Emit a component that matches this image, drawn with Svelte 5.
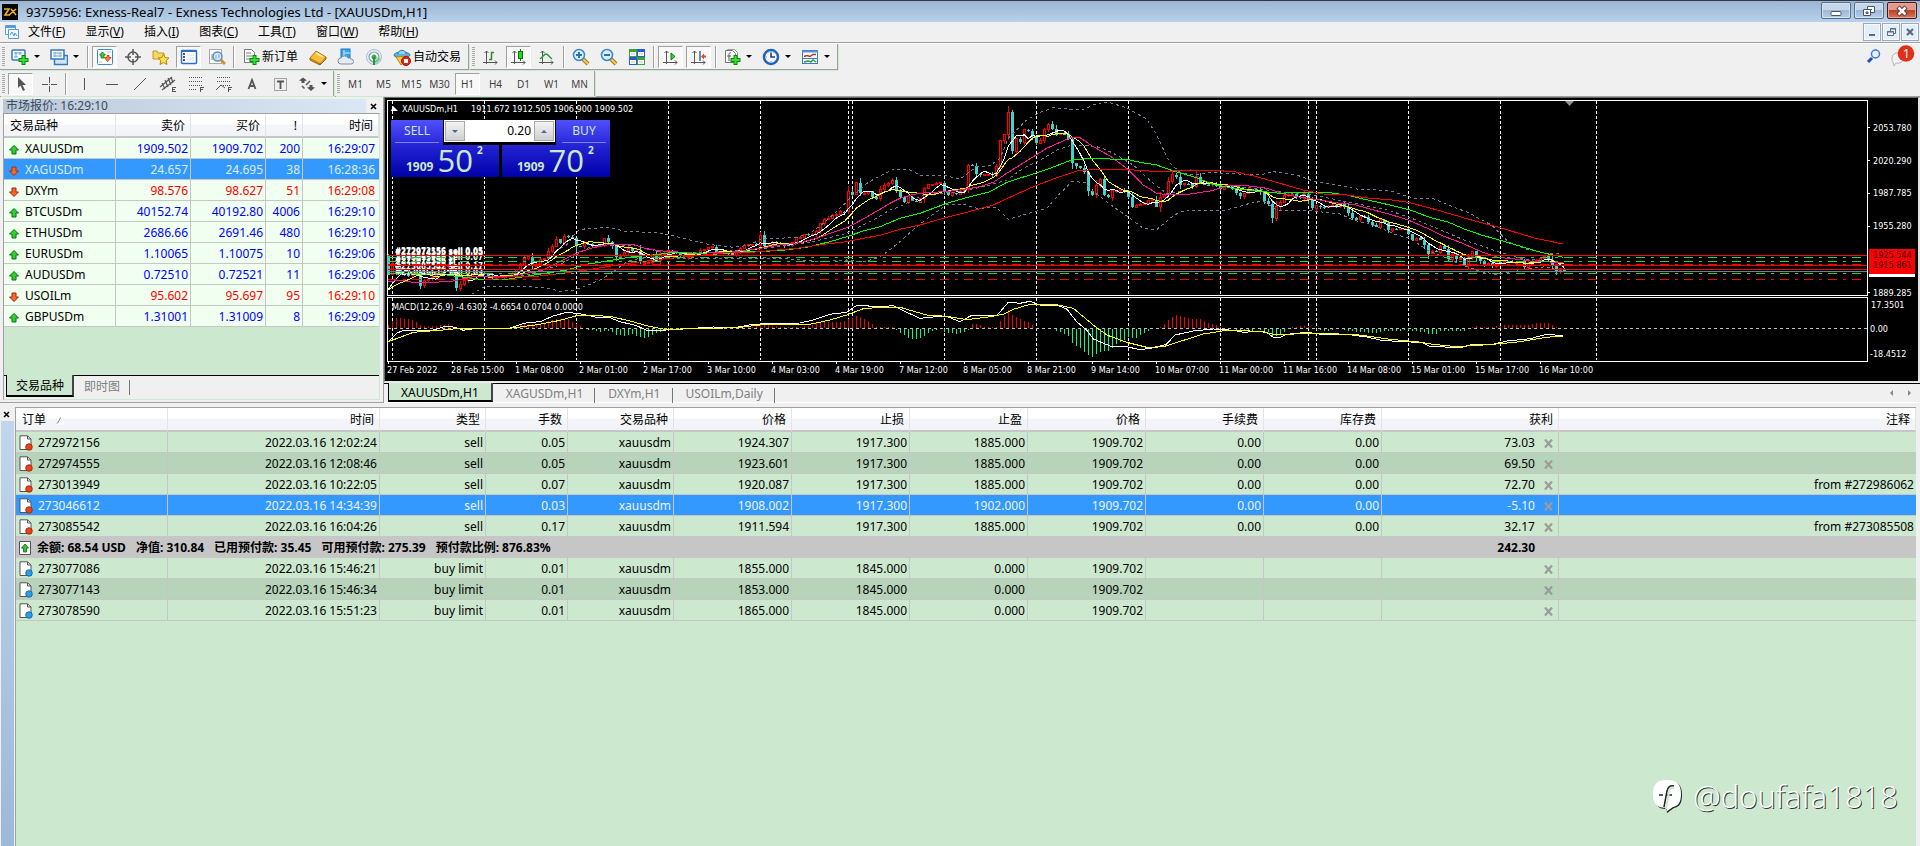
<script>
  const menus = [
    ['文件', 'F'], ['显示', 'V'], ['插入', 'I'], ['图表', 'C'], ['工具', 'T'], ['窗口', 'W'], ['帮助', 'H']
  ];

  // Toolbar descriptions: "|" is a separator; drop = has a menu arrow; on = pressed.
  const mainTools = [
    { icon: 'newchart', label: '新图表', drop: true },
    { icon: 'profiles', label: '配置文件', drop: true },
    '|',
    { icon: 'watch', label: '市场报价', on: true },
    { icon: 'target', label: '数据窗口' },
    { icon: 'favorites', label: '收藏夹' },
    { icon: 'terminal', label: '终端', on: true },
    { icon: 'tester', label: '策略测试' },
    '|',
    { icon: 'order', label: '新订单', text: '新订单' },
    { icon: 'book', label: '编辑器' },
    { icon: 'cloud', label: '云' },
    { icon: 'signal', label: '信号' },
    { icon: 'auto', label: '自动交易', text: '自动交易' }
  ];
  const chartTools = [
    { icon: 'bars', label: '柱状图' },
    { icon: 'candles', label: '蜡烛图', on: true },
    { icon: 'line', label: '折线图' },
    '|',
    { icon: 'zoomin', label: '放大' },
    { icon: 'zoomout', label: '缩小' },
    { icon: 'tile', label: '平铺' },
    '|',
    { icon: 'scroll', label: '自动滚动', on: true },
    { icon: 'shift', label: '图表平移', on: true },
    '|',
    { icon: 'indicator', label: '技术指标', drop: true },
    { icon: 'clock', label: '周期', drop: true },
    { icon: 'template', label: '模板', drop: true }
  ];
  const drawTools = [
    { icon: 'pointer', label: '光标', on: true },
    { icon: 'cross', label: '十字线' },
    '|',
    { icon: 'vline', label: '垂直线' },
    { icon: 'hline', label: '水平线' },
    { icon: 'trend', label: '趋势线' },
    { icon: 'channel', label: '通道' },
    { icon: 'fibo', label: '斐波那契' },
    { icon: 'fan', label: '扇形线' },
    { icon: 'text', label: '文字' },
    { icon: 'label', label: '标签' },
    { icon: 'arrows', label: '箭头', drop: true }
  ];
  const periods = ['M1', 'M5', 'M15', 'M30', 'H1', 'H4', 'D1', 'W1', 'MN'];

  const quotes = [
    ['XAUUSDm', '1909.502', '1909.702', '200', '16:29:07', 'up'],
    ['XAGUSDm', '24.657', '24.695', '38', '16:28:36', 'down'],
    ['DXYm', '98.576', '98.627', '51', '16:29:08', 'down'],
    ['BTCUSDm', '40152.74', '40192.80', '4006', '16:29:10', 'up'],
    ['ETHUSDm', '2686.66', '2691.46', '480', '16:29:10', 'up'],
    ['EURUSDm', '1.10065', '1.10075', '10', '16:29:06', 'up'],
    ['AUDUSDm', '0.72510', '0.72521', '11', '16:29:06', 'up'],
    ['USOILm', '95.602', '95.697', '95', '16:29:10', 'down'],
    ['GBPUSDm', '1.31001', '1.31009', '8', '16:29:09', 'up']
  ];

  const heads = ['时间', '类型', '手数', '交易品种', '价格', '止损', '止盈', '价格', '手续费', '库存费'];
  const open = [
    ['272972156', '2022.03.16 12:02:24', 'sell', '0.05', 'xauusdm', '1924.307', '1917.300', '1885.000', '1909.702', '0.00', '0.00', '73.03', ''],
    ['272974555', '2022.03.16 12:08:46', 'sell', '0.05', 'xauusdm', '1923.601', '1917.300', '1885.000', '1909.702', '0.00', '0.00', '69.50', ''],
    ['273013949', '2022.03.16 10:22:05', 'sell', '0.07', 'xauusdm', '1920.087', '1917.300', '1885.000', '1909.702', '0.00', '0.00', '72.70', 'from #272986062'],
    ['273046612', '2022.03.16 14:34:39', 'sell', '0.03', 'xauusdm', '1908.002', '1917.300', '1902.000', '1909.702', '0.00', '0.00', '-5.10', ''],
    ['273085542', '2022.03.16 16:04:26', 'sell', '0.17', 'xauusdm', '1911.594', '1917.300', '1885.000', '1909.702', '0.00', '0.00', '32.17', 'from #273085508']
  ];
  const pending = [
    ['273077086', '2022.03.16 15:46:21', 'buy limit', '0.01', 'xauusdm', '1855.000', '1845.000', '0.000', '1909.702', '', '', '', ''],
    ['273077143', '2022.03.16 15:46:34', 'buy limit', '0.01', 'xauusdm', '1853.000', '1845.000', '0.000', '1909.702', '', '', '', ''],
    ['273078590', '2022.03.16 15:51:23', 'buy limit', '0.01', 'xauusdm', '1865.000', '1845.000', '0.000', '1909.702', '', '', '', '']
  ];
  const balance = ['余额: 68.54 USD', '净值: 310.84', '已用预付款: 35.45', '可用预付款: 275.39', '预付款比例: 876.83%'];

  // Chart series are stored as flat x,y lists in thirds of a pixel.
  const X = (v) => v / 3 - 5;
  const Y = (v) => v / 3 - 3;
  const pairs = (s) => {
    const n = s.trim().split(/[\s,]+/).map(Number);
    const out = [];
    for (let i = 0; i < n.length; i += 2) out.push([n[i], n[i + 1]]);
    return out;
  };
  const sample = (pts, x) => {
    if (x <= pts[0][0]) return pts[0][1];
    for (let i = 1; i < pts.length; i++) {
      if (x <= pts[i][0]) {
        const [x0, y0] = pts[i - 1];
        const [x1, y1] = pts[i];
        return y0 + ((y1 - y0) * (x - x0)) / (x1 - x0);
      }
    }
    return pts[pts.length - 1][1];
  };
  const poly = (pts) => pts.map(([x, y]) => `${X(x).toFixed(1)},${Y(y).toFixed(1)}`).join(' ');

  const closes = pairs(`25,540 37,505 49,520 61,535 85,540 109,530 121,570 133,560 157,545 181,525 205,510 217,530 229,580 241,570 253,560 265,545 289,530 313,540 337,548 361,545 385,540 405,530 421,510 433,490 445,485 457,510 469,512 481,492 493,490 505,470 517,455 529,435 541,445 553,425 565,425 577,430 589,455 601,455 613,445 637,452 661,450 673,428 685,440 697,455 709,485 721,480 733,470 745,460 757,470 769,465 781,500 793,500 805,500 817,480 829,495 841,475 865,470 889,472 913,485 937,478 961,468 985,460 997,455 1009,470 1033,472 1057,478 1081,460 1105,447 1129,450 1141,420 1153,455 1165,450 1177,440 1201,448 1225,455 1249,430 1273,418 1297,418 1309,410 1321,385 1333,375 1345,370 1369,355 1393,350 1405,290 1417,298 1429,265 1441,295 1453,295 1465,290 1477,305 1489,310 1501,285 1513,270 1525,265 1537,255 1549,285
    1561,305 1573,320 1585,305 1597,315 1609,320 1621,310 1633,280 1645,270 1669,265 1681,262 1693,285 1705,300 1717,292 1729,298 1741,290 1753,282 1765,210 1777,210 1789,235 1801,240 1825,235 1837,240 1849,215 1861,140 1873,120 1885,50 1897,170 1909,130 1921,140 1933,105 1945,108 1957,125 1969,145 1981,135 1993,100 2005,88 2017,102 2029,118 2053,118 2065,130 2077,205 2089,215 2101,220 2113,230 2125,290 2137,300 2149,270 2161,255 2173,300 2185,305 2197,290 2209,285 2233,288 2245,305 2257,335 2269,332 2293,325 2305,315 2317,312 2329,335 2341,310 2353,300 2365,260 2377,240 2389,245 2401,270 2413,265 2437,275 2449,245 2461,268 2485,268 2509,270 2521,280 2545,275 2569,295 2581,305 2593,295 2605,285 2629,285 2641,290 2653,315 2665,330 2677,372 2689,335 2701,320 2713,300 2737,300 2761,308 2773,298 2785,315 2797,338 2809,330 2833,340 2857,330 2869,338 2881,328 2893,335 2905,355 2917,370 2929,375 2941,365 2953,368 2965,382 2977,392 2989,395 3001,375 3013,385 3025,405
    3036,400 3048,405 3060,400 3073,402 3085,415 3097,437 3109,430 3121,432 3133,452 3146,480 3158,470 3170,470 3182,455 3194,465 3206,492 3219,480 3231,495 3241,490 3253,512 3265,485 3277,470 3290,485 3302,498 3314,510 3326,505 3338,512 3350,502 3375,500 3397,505 3421,500 3434,515 3446,505 3470,495 3492,485 3505,495 3517,512 3529,528 3541,522 3553,530`);

  const noise = (i, k) => {
    const v = Math.sin(i * 12.9898 + k * 78.233) * 43758.5453;
    return v - Math.floor(v);
  };
  const COUNT = 295;
  const close = Array.from({ length: COUNT }, (_, i) => sample(closes, 25 + 12 * i) + (noise(i, 3) - 0.5) * 5);
  const candles = close.map((c, i) => {
    const o = i === 0 ? 480 : close[i - 1];
    const reach = 4 + Math.min(14, Math.abs(c - o) / 2);
    return {
      x: 3 + 4 * i,
      up: c < o,
      top: Y(Math.min(o, c)),
      h: Math.max(1, Math.abs(c - o) / 3),
      hi: Y(Math.min(o, c) - noise(i, 1) * reach),
      lo: Y(Math.max(o, c) + noise(i, 2) * reach)
    };
  });
  const average = (n, before) =>
    close.map((_, i) => {
      let s = 0;
      for (let k = 0; k < n; k++) s += i - k >= 0 ? close[i - k] : before;
      return [25 + 12 * i, s / n];
    });
  const fast = average(5, 595);
  const slow = average(10, 590);

  const magenta = pairs(`25,560 60,556 100,562 150,563 220,558 280,545 330,545 390,545 440,535 490,525 530,505 560,490 600,470 640,458 680,450 760,448 800,462 850,468 950,475 1050,472 1140,460 1200,450 1260,443 1310,430 1350,415 1400,398 1450,372 1500,343 1530,325 1560,310 1600,298 1650,292 1700,290 1750,283 1800,275 1840,262 1880,235 1920,210 1960,185 2000,160 2040,142 2075,127 2100,128 2140,155 2190,183 2240,220 2290,270 2330,295 2370,300 2430,297 2490,288 2520,280 2540,270 2600,272 2660,280 2720,300 2770,308 2820,315 2880,325 2920,328 2970,342 3030,358 3085,375 3142,400 3192,424 3243,443 3304,470 3355,487 3405,492 3466,500 3550,502`);
  const green = pairs(`25,535 200,540 300,553 380,553 450,542 560,525 620,508 700,495 760,485 820,480 880,472 1000,478 1100,470 1200,467 1280,457 1350,440 1400,425 1450,408 1500,395 1560,370 1620,355 1700,325 1770,305 1830,290 1880,262 1940,243 2010,220 2080,193 2140,191 2240,193 2280,202 2330,210 2380,228 2440,245 2500,268 2550,278 2600,285 2700,295 2760,292 2840,292 2900,300 2950,312 3030,330 3091,345 3152,368 3202,380 3253,402 3304,420 3365,437 3436,458 3476,470 3550,487`);
  const red = pairs(`340,548 400,545 480,543 560,533 620,525 700,512 760,503 850,492 950,482 1050,472 1100,473 1250,460 1330,448 1400,440 1460,428 1500,421 1560,403 1620,390 1690,370 1760,352 1840,330 1900,302 1960,275 2020,252 2090,228 2140,224 2230,223 2340,230 2430,225 2560,229 2630,245 2700,265 2770,285 2830,297 2900,300 2970,310 3030,314 3085,322 3172,345 3263,372 3361,398 3466,430 3550,447`);
  const bandTop = pairs(`541,460 560,450 589,410 620,400 690,398 740,410 830,412 870,420 910,430 985,448 1060,457 1110,450 1141,433 1250,427 1290,415 1330,385 1380,340 1420,300 1465,262 1500,243 1540,223 1590,225 1620,240 1700,243 1740,252 1790,215 1830,212 1860,190 1885,130 1910,105 1940,75 1980,52 2020,38 2070,43 2110,43 2140,30 2185,22 2240,38 2300,72 2330,120 2370,205 2400,232 2440,240 2490,233 2640,240 2680,230 2750,240 2800,258 2870,270 2930,282 3030,287 3101,310 3162,312 3223,337 3263,352 3334,390 3385,440 3436,462 3497,475 3550,474`);
  const bandLow = pairs(`275,598 315,574 430,575 490,577 540,589 580,586 620,572 660,555 700,530 740,500 780,490 850,487 900,492 960,490 1090,490 1200,490 1330,500 1400,495 1450,500 1490,490 1520,472 1560,440 1610,395 1650,365 1700,328 1750,328 1790,340 1850,338 1885,373 1930,360 2000,340 2040,295 2075,260 2115,262 2140,290 2200,335 2250,370 2290,400 2330,404 2370,370 2400,350 2440,346 2540,345 2610,325 2650,318 2690,345 2790,347 2880,357 2920,375 2980,390 3050,420 3091,430 3142,465 3253,512 3304,530 3355,539 3415,525 3497,515 3550,530`);
  const bandMid = pairs(`315,545 440,540 540,510 589,480 640,450 760,450 840,470 960,474 1140,462 1300,440 1400,415 1480,375 1530,345 1560,335 1630,300 1740,290 1830,270 1880,255 1930,220 1990,190 2030,165 2070,152 2120,152 2160,157 2200,175 2260,210 2320,265 2360,295 2400,290 2460,265 2580,275 2740,295 2800,300 2900,320 3030,347 3109,375 3182,405 3253,435 3355,470 3420,490 3550,505`);

  const histo = pairs(`25,10 49,31 73,28 97,24 121,10 145,5 181,8 205,12 229,0 253,-6 265,0 400,0 410,2 433,14 457,12 481,10 505,20 529,28 565,27 589,12 613,0 637,-4 661,-8 690,-4 709,-18 733,-20 757,-16 793,-27 817,-18 841,-8 865,0 970,0 985,3 1009,4 1033,0 1120,2 1141,14 1165,8 1200,4 1250,3 1285,6 1309,14 1333,20 1381,18 1405,26 1430,36 1453,28 1477,12 1489,4 1520,4 1540,2 1561,-12 1585,-26 1609,-31 1633,-20 1657,-6 1680,0 1693,-8 1729,-16 1753,-10 1768,0 1777,12 1789,12 1813,4 1850,3 1861,20 1873,35 1885,53 1897,38 1921,26 1945,18 1960,6 1970,0 2015,0 2029,-6 2053,-14 2065,-22 2077,-42 2101,-58 2125,-78 2137,-84 2161,-68 2185,-66 2210,-45 2245,-25 2269,-26 2293,-12 2320,0 2341,3 2365,24 2389,40 2413,34 2437,26 2461,26 2485,16 2509,8 2521,4 2530,0 2570,-2 2605,-9 2629,0 2665,-10 2677,-24 2701,-15 2725,0 2745,4 2773,7 2790,0 2840,-6 2870,0 2929,-8 2989,-13 3013,-6 3050,-7 3070,-3 3109,-6 3133,-10 3146,-16 3170,-16 3182,-6 3253,-5 3268,0 3290,6 3310,3 3338,3 3375,10 3446,8 3466,14 3500,17 3520,6 3541,0`);
  const bars = Array.from({ length: COUNT }, (_, i) => ({ x: 3 + 4 * i, v: sample(histo, 25 + 12 * i) / 3 }))
    .filter((b) => Math.abs(b.v) > 0.5);
  const macdWhite = pairs(`25,740 50,715 70,706 130,708 160,705 200,693 225,697 250,706 290,700 390,699 410,692 440,683 480,680 520,663 560,652 600,656 650,667 690,668 720,680 770,692 800,706 860,705 910,702 1000,696 1070,697 1120,688 1190,685 1260,684 1300,675 1350,658 1400,652 1430,631 1500,635 1540,632 1565,645 1620,670 1670,665 1700,664 1740,680 1775,661 1850,662 1885,622 1920,625 1950,619 1980,630 2030,630 2060,642 2090,680 2120,705 2140,732 2190,753 2240,755 2280,764 2330,757 2360,747 2385,720 2440,708 2500,702 2560,706 2590,712 2640,709 2660,712 2680,727 2700,727 2720,718 2780,712 2840,720 2900,718 2960,726 3000,735 3060,740 3125,742 3150,754 3240,758 3270,750 3340,748 3380,738 3450,731 3500,718 3550,722`);
  const macdYellow = pairs(`25,740 100,712 190,705 240,700 290,700 390,700 480,688 540,676 590,662 620,661 690,664 750,678 800,692 850,702 900,702 1070,698 1140,690 1290,688 1350,675 1400,660 1450,641 1500,637 1560,637 1640,660 1700,664 1760,674 1830,665 1870,658 1900,643 1950,628 2030,629 2080,640 2140,690 2180,720 2240,742 2300,757 2350,755 2420,733 2470,717 2540,706 2640,709 2690,720 2780,715 2920,718 2960,723 3030,733 3110,740 3160,748 3230,755 3340,748 3420,740 3500,727 3550,723`);

  const days = [37, 313, 589, 865, 1141, 1405, 1417, 1693, 1969, 2245, 2521, 2785, 2809, 3085, 3361, 3649];
  const levels = [
    [481, '#f00', ''], [487, '#32cd32', '9 6 3 6'], [499, '#32cd32', '9 6 3 6'], [508, '#f00', '9 6 3 6'],
    [511, '#f00', ''], [523, '#f00', ''], [529, '#708090', ''], [535, '#32cd32', '9 6 3 6'], [553, '#f00', '9 6 3 6']
  ];
  const tags = [
    [477, '#272972156 sell 0.05'], [480, '#272974555 sell 0.05'], [494, '#273013949 sell 0.07'],
    [505, '#272972156 sl'], [507, '#272974555 sl'], [521, '#273085542 sell 0.17'], [540, '#273046612 sell 0.03']
  ];
  const times = ['27 Feb 2022', '28 Feb 15:00', '1 Mar 08:00', '2 Mar 01:00', '2 Mar 17:00', '3 Mar 10:00', '4 Mar 03:00', '4 Mar 19:00', '7 Mar 12:00', '8 Mar 05:00', '8 Mar 21:00', '9 Mar 14:00', '10 Mar 07:00', '11 Mar 00:00', '11 Mar 16:00', '14 Mar 08:00', '15 Mar 01:00', '15 Mar 17:00', '16 Mar 10:00'];
  const prices = [[98, '2053.780'], [197, '2020.290'], [295, '1987.785'], [394, '1955.280'], [593, '1889.285']];
  const charts = ['XAUUSDm,H1', 'XAGUSDm,H1', 'DXYm,H1', 'USOILm,Daily'];

  let volume = $state('0.20');
</script>

{#snippet icon(name)}
  <svg class="ico" width="18" height="18" viewBox="0 0 18 18" fill="none" stroke="#555" stroke-width="1" aria-hidden="true">
    {#if name === 'newchart'}
      <rect x="1" y="2" width="13" height="10" rx="1" fill="#f4faff" stroke="#3a78b5" stroke-width="1.5" />
      <path d="M3 5h8M5 4v5M9 4v3M3 9h4" stroke="#6a9fd0" />
      <path d="M12.500 7v10M7.500 12h10" stroke="#0a8a0a" stroke-width="4" /><path d="M12.500 8v8M8.500 12h8" stroke="#3ae03a" stroke-width="2" />
    {:else if name === 'profiles'}
      <rect x="4.500" y="7.500" width="13" height="9" fill="#cfe4f7" stroke="#3a78b5" stroke-width="1.500" />
      <rect x="1" y="2" width="13" height="9" fill="#eef7ff" stroke="#3a78b5" stroke-width="1.500" />
      <path d="M3 5h9M3 8h9M5 4v5M10 4v5" stroke="#7aa9d4" />
    {:else if name === 'watch'}
      <rect x="1.500" y="1.500" width="15" height="15" rx="1" fill="#fff" stroke="#3f86cf" />
      <path d="M6.500 4l3 3H8v3H5V7H3.500z" fill="#3cc63c" stroke="#177a17" stroke-width=".8" /><path d="M10 9.500h1v-2h2v2h2l-3.500 4-3-4z" fill="#ff8050" stroke="#c02a00" stroke-width=".8" />
      <path d="M3 14h3M11 4h4" stroke="#9cc" />
    {:else if name === 'target'}
      <circle cx="9" cy="9" r="5" stroke-width="1.500" /><path d="M9 1v6M9 11v6M1 9h6M11 9h6" stroke-width="1.500" />
    {:else if name === 'favorites'}
      <path d="M1 3h4l1 2h6v6H1z" fill="#f6d76a" stroke="#c19a2b" />
      <path d="M11.500 6l1.700 3.600 3.800.4-2.800 2.600.8 3.900-3.500-2-3.500 2 .8-3.900L6 10l3.800-.4z" fill="#ffe14d" stroke="#b8860b" />
    {:else if name === 'terminal'}
      <rect x="1.500" y="2.500" width="15" height="13" rx="1" fill="#fff" stroke="#2a6fc4" stroke-width="1.500" /><path d="M1 3h16" stroke="#2a6fc4" stroke-width="2" /><path d="M4 5v9" stroke="#555" stroke-width="2" stroke-dasharray="2 1" /><path d="M7 7h7M7 10h7M7 12h7" stroke="#cde" />
    {:else if name === 'tester'}
      <rect x="1.500" y="1.500" width="12" height="14" fill="#fafafa" stroke="#aaa" /><path d="M4 12V6M7 9V4" stroke="#999" />
      <circle cx="9.500" cy="8.500" r="4.500" fill="#cfe8fb" stroke="#5a8fbf" stroke-width="1.500" /><path d="M8 7v4M11 6v4" stroke="#8ab" /><path d="M13 12l4 4" stroke="#c8962a" stroke-width="3" />
    {:else if name === 'order'}
      <path d="M2.500 1.500h7l3 3v10h-10z" fill="#fff" stroke="#777" /><path d="M4 5h5M4 8h6M4 11h4" stroke="#777" />
      <path d="M12.500 7v10M7.500 12h10" stroke="#0a8a0a" stroke-width="4" /><path d="M12.500 8v8M8.500 12h8" stroke="#3ae03a" stroke-width="2" />
    {:else if name === 'book'}
      <path d="M1 10l6-7 10 6-6 7z" fill="#f3bf3a" stroke="#b4780f" /><path d="M1 10v2l10 5v-2M11 17l6-6V9" fill="#c98a1c" stroke="#9a640c" /><path d="M7 5l7 4" stroke="#fde59a" stroke-width="2" />
    {:else if name === 'cloud'}
      <rect x="4" y="1" width="9" height="9" fill="#36a3ee" stroke="#1878c4" /><path d="M7 2v7M8 5h5" stroke="#dff1ff" />
      <path d="M4 16a3 3 0 010-6 4 4 0 017 0 3 3 0 013 1 2.500 2.500 0 010 5z" fill="#e6ecf5" stroke="#7c8fae" />
    {:else if name === 'signal'}
      <path d="M9 9v8c4-1 6-3 7-7z" fill="#a5dca8" stroke="none" /><circle cx="9" cy="9" r="7.500" stroke="#9fbfd6" /><circle cx="9" cy="9" r="5" stroke="#76a5b5" stroke-width="1.200" /><circle cx="9" cy="9" r="2" fill="#2ea84a" stroke="#2ea84a" /><path d="M9 9v8" stroke="#1f9a30" stroke-width="2" />
    {:else if name === 'auto'}
      <ellipse cx="9" cy="7" rx="8" ry="3" fill="#5cb0dd" stroke="#2f7fa9" /><path d="M5 6c0-5 8-5 8 0" fill="#8dd0f0" stroke="#2f7fa9" />
      <path d="M3 9l5 8 6-5 1-4z" fill="#f2c84b" stroke="#b98a1b" /><circle cx="13" cy="13" r="4.500" fill="#e32612" stroke="#9f1206" /><rect x="11" y="11" width="4" height="4" fill="#fff" stroke="none" />
    {:else if name === 'bars'}
      <path d="M4.500 3v13M1 14.500h14M2.500 5l2-2 2 2M13 12.500l2 2-2 2" /><path d="M9.500 4v8M9 4.500h3M7 11.500h3" stroke="#2c8a2c" stroke-width="1.500" />
    {:else if name === 'candles'}
      <path d="M4.500 3v13M1 14.500h14M2.500 5l2-2 2 2M13 12.500l2 2-2 2" /><path d="M10.500 1v12" stroke="#067a06" /><rect x="8.500" y="3.500" width="4" height="7" fill="#25d52c" stroke="#067a06" />
    {:else if name === 'line'}
      <path d="M4.500 3v13M1 14.500h14M2.500 5l2-2 2 2M13 12.500l2 2-2 2" /><path d="M2 11c3-2 4-5 6-5s3 3 6 5" stroke="#2c9a3c" stroke-width="1.500" />
    {:else if name === 'zoomin' || name === 'zoomout'}
      <path d="M11 11l5 5" stroke="#a87a18" stroke-width="4" /><path d="M11 11l5 5" stroke="#f1cd55" stroke-width="2" />
      <circle cx="7" cy="7" r="5.500" fill="#d9effc" stroke="#3f86c6" stroke-width="1.500" />
      <path d={name === 'zoomin' ? 'M4 7h6M7 4v6' : 'M4 7h6'} stroke="#2c6fb3" stroke-width="2" />
    {:else if name === 'tile'}
      <rect x="1" y="1" width="8" height="8" fill="#3da52c" stroke="none" /><rect x="9" y="1" width="8" height="8" fill="#2a5bd0" stroke="none" /><rect x="1" y="9" width="8" height="8" fill="#2a5bd0" stroke="none" /><rect x="9" y="9" width="8" height="8" fill="#3da52c" stroke="none" />
      <path d="M2 4h6v4H2zM10 4h6v4h-6zM2 12h6v4H2zM10 12h6v4h-6z" fill="#fff" stroke="none" /><path d="M3 6h4M11 6h4M3 14h4M11 14h4" stroke="#b9c9e6" />
    {:else if name === 'scroll'}
      <path d="M4.500 3v13M1 14.500h14M2.500 5l2-2 2 2M13 12.500l2 2-2 2" /><path d="M9 5l4 3.500L9 12z" fill="#3fd03f" stroke="#127a12" />
    {:else if name === 'shift'}
      <path d="M4.500 3v13M1 14.500h14M2.500 5l2-2 2 2M13 12.500l2 2-2 2" /><path d="M10 3v10" stroke="#2d6e9e" stroke-width="1.500" /><path d="M11 8.500l3-3v2h2v2h-2v2z" fill="#e0481c" stroke="none" />
    {:else if name === 'indicator'}
      <path d="M4.500 3.500v-2h7l3 3v10" fill="#fff" stroke="#999" /><path d="M2.500 2.500h7l3 3v9h-10z" fill="#fff" stroke="#777" /><path d="M8 5c-2-1-2 1-2 3v5M4 8h4" stroke="#555" />
      <path d="M12.500 7v10M7.500 12h10" stroke="#0a8a0a" stroke-width="4" /><path d="M12.500 8v8M8.500 12h8" stroke="#3ae03a" stroke-width="2" />
    {:else if name === 'clock'}
      <circle cx="9" cy="9" r="7" fill="#eef5fc" stroke="#1d63b6" stroke-width="2.500" /><path d="M5 5a6 6 0 018 0" stroke="#7ab8f0" /><path d="M9 4.500V9h4" stroke="#335" stroke-width="1.500" /><path d="M9 13v1M4 9h1" stroke="#99a" />
    {:else if name === 'template'}
      <rect x="1.500" y="2.500" width="15" height="13" fill="#fff" stroke="#3a78c0" /><path d="M1 3.500h16" stroke="#4f92dc" stroke-width="2" /><path d="M3 8.500l3-1 3 1 3-2h3" stroke="#a33a1c" stroke-width="1.500" /><path d="M2 10.500h14" stroke="#3a78c0" /><path d="M3 14l4-1 3 1 2-2 3 2" stroke="#2c9a3c" stroke-width="1.500" />
    {:else if name === 'pointer'}
      <path d="M6 2v11l2.500-2.500L11 16l2-1-2.500-5H14z" fill="#555" stroke="none" />
    {:else if name === 'cross'}
      <path d="M9.500 2v6M9.500 11v6M2 9.500h6M11 9.500h6M9 9.500h1" />
    {:else if name === 'vline'}
      <path d="M9.500 3v12" />
    {:else if name === 'hline'}
      <path d="M3 9.500h12" />
    {:else if name === 'trend'}
      <path d="M3 15L15 3" />
    {:else if name === 'channel'}
      <path d="M1 12L13 2M3 15L16 5M3 8l3 6M6 5l3 7M9 3l3 7M12 2l2 6" stroke-width="1.200" /><path d="M13 12.500h4M13 14.500h3M13 16.500h4M13.500 12v5" />
    {:else if name === 'fibo'}
      <path d="M2 2.500h14M2 6.500h14M2 10.500h14M2 14.500h8" stroke-dasharray="1 1" /><path d="M13.500 17v-5M13 12.500h4M13 14.500h3" />
    {:else if name === 'fan'}
      <path d="M2 2.500h14M2 6.500h14M6 10.500h10" stroke-dasharray="1 1" /><path d="M1 15l5-5 4 3" /><path d="M13.500 17v-5M13 12.500h4M13 14.500h3" />
    {:else if name === 'text'}
      <path d="M5.500 14L9 5l3.500 9M6.500 11h5" stroke-width="1.800" />
    {:else if name === 'label'}
      <rect x="3.500" y="3.500" width="12" height="12" stroke-dasharray="1 1" /><path d="M6 6.500h7M9.500 6v8" stroke-width="1.800" />
    {:else if name === 'arrows'}
      <path d="M1 5.500l4-3 4 3-2.500.500v2h-3v-2zM9 12.500l2.500-.5v-2h3v2l2.500.5-4 3.500z" fill="#555" stroke="none" /><path d="M4 11l2.500 2.500M8 10l4-4" stroke-width="1.500" />
    {/if}
  </svg>
{/snippet}

{#snippet tools(list)}
  {#each list as t}
    {#if t === '|'}
      <span class="sep"></span>
    {:else}
      <button class="tool" class:on={t.on} class:drop={t.drop} class:wide={t.text} aria-label={t.label}>
        {@render icon(t.icon)}
        {#if t.text}<span>{t.text}</span>{/if}
        {#if t.drop}<i class="caret"></i>{/if}
      </button>
    {/if}
  {/each}
{/snippet}

{#snippet orderRow(row, i, kind)}
  <tr class:alt={i === 1} class:sel={kind === 'sell' && i === 3}>
    {#each row as cell, c}
      {#if c === 0}
        <td class="first">
          <svg width="14" height="16" viewBox="0 0 14 16" aria-hidden="true">
            <path d="M1 .8h7.500L12 4v10.500H1z" fill="#fff" stroke="#555" /><path d="M8.500 1v3H12" fill="none" stroke="#555" />
            <circle cx="10" cy="12" r="3.300" fill={kind === 'sell' ? '#e8431a' : '#2a9df0'} stroke={kind === 'sell' ? '#8f2408' : '#0f5c9c'} stroke-width=".8" />
          </svg>{cell}
        </td>
      {:else if c === 11}
        <td><span class="profit">{cell}<button class="drop-order" aria-label="平仓"><svg width="9" height="9" viewBox="0 0 9 9"><path d="M1 .5l7 8M8 .5l-7 8" stroke="#9c9c9c" stroke-width="2.200" /></svg></button></span></td>
      {:else}
        <td>{cell}</td>
      {/if}
    {/each}
  </tr>
{/snippet}

<div class="app">
  <header class="title">
    <svg width="16" height="16" viewBox="0 0 16 16" aria-hidden="true"><rect width="16" height="16" fill="#080600" /><path d="M2 5h5L3 11h5M7 11l7-6M9 5l5 6" fill="none" stroke="#e8b422" stroke-width="1.600" /></svg>
    <h1>9375956: Exness-Real7 - Exness Technologies Ltd - [XAUUSDm,H1]</h1>
    <div class="winbtns">
      <button aria-label="最小化"><svg width="28" height="14" viewBox="0 0 28 14"><rect x="9" y="7.500" width="10" height="4" rx="1" fill="#fff" stroke="#46556b" /></svg></button>
      <button aria-label="还原"><svg width="28" height="14" viewBox="0 0 28 14"><path d="M12.500 2.500h7v6h-7z" fill="#fff" stroke="#46556b" /><path d="M15 5h2v1h-2z" fill="#46556b" /><path d="M8.500 5.500h7v6h-7z" fill="#fff" stroke="#46556b" /><path d="M11 8h2v1.500h-2z" fill="#8ea8c8" stroke="#46556b" /></svg></button>
      <button class="close" aria-label="关闭"><svg width="28" height="14" viewBox="0 0 28 14"><path d="M10 3l8 8M18 3l-8 8" stroke="#5b2a26" stroke-width="4.500" /><path d="M10.500 3.500l7 7M17.500 3.500l-7 7" stroke="#fff" stroke-width="2.500" /></svg></button>
    </div>
  </header>

  <nav class="menu">
    <svg width="16" height="16" viewBox="0 0 16 16" fill="#f2f8ff" stroke="#5b9bdc" aria-hidden="true"><path d="M1.500 1.500h10v9h-10z" /><path d="M1 3h11" stroke-width="2" /><path d="M4.500 5.500h10v9h-10z" /><path d="M6 11l2-3 2 4 1-3 2 3" fill="none" /></svg>
    {#each menus as [name, key]}
      <button>{name}(<u>{key}</u>)</button>
    {/each}
    <div class="mdi">
      <button aria-label="最小化窗口"><svg width="16" height="16" viewBox="0 0 16 16"><path d="M5 11h6" stroke="#5c6c80" stroke-width="2" /></svg></button>
      <button aria-label="还原窗口"><svg width="16" height="16" viewBox="0 0 16 16" fill="none" stroke="#5c6c80"><path d="M4.500 7.500h6v4h-6zM4 8h7M7.500 7V4.500h5v5H11M7 5h6" /></svg></button>
      <button aria-label="关闭窗口"><svg width="16" height="16" viewBox="0 0 16 16"><path d="M5 5l6 6M11 5l-6 6" stroke="#5c6c80" stroke-width="2.200" /></svg></button>
    </div>
  </nav>

  <div class="bars">
    <div class="row">
      <div class="bar"><i class="grip"></i>{@render tools(mainTools)}</div>
      <div class="bar"><i class="grip"></i>{@render tools(chartTools)}</div>
      <div class="corner">
        <button aria-label="搜索"><svg width="16" height="16" viewBox="0 0 16 16"><path d="M2 14l4-4" stroke="#1c4db8" stroke-width="3" /><circle cx="9.500" cy="6" r="4" fill="#e8f1ff" stroke="#3c78e0" stroke-width="1.500" /></svg></button>
        <button class="msg" aria-label="消息"><svg width="26" height="24" viewBox="0 0 26 24"><path d="M3 14c0-7 12-7 12 0 0 4-5 6-8 5l-2 3-1-4c-1-1-1-2-1-4z" fill="#f2f2f5" stroke="#b5b5b8" /><circle cx="17" cy="9.500" r="8.300" fill="#e0301c" /></svg><b>1</b></button>
      </div>
    </div>
    <div class="row second">
      <div class="bar draw"><i class="grip"></i>{@render tools(drawTools)}</div>
      <div class="bar">
        <i class="grip"></i>
        {#each periods as p}
          <button class="tool period" class:on={p === 'H1'}>{p}</button>
        {/each}
      </div>
    </div>
  </div>

  <main>
    <section class="market">
      <div class="caption"><h2>市场报价: 16:29:10</h2><button aria-label="关闭市场报价"><svg width="7" height="7" viewBox="0 0 7 7"><path d="M1 1l5 5M6 1L1 6" stroke="#000" stroke-width="1.600" /></svg></button></div>
      <div class="sheet">
        <table class="quotes">
          <colgroup><col class="q-name" /><col class="q-price" /><col class="q-price" /><col class="q-spread" /><col /></colgroup>
          <thead><tr><th>交易品种</th><th>卖价</th><th>买价</th><th>!</th><th>时间</th></tr></thead>
          <tbody>
            {#each quotes as [sym, bid, ask, spread, time, dir], i}
              <tr class={dir} class:sel={i === 1}>
                <td class="first"><svg width="12" height="12" viewBox="0 0 12 12" aria-hidden="true">
                  {#if dir === 'up'}<path d="M6 1.500l4.500 4.500H8v4H4V6H1.500z" fill="#2fd12f" stroke="#0b6e12" />{:else}<path d="M6 10.500L1.500 6H4V2h4v4h2.500z" fill="#f26a30" stroke="#a8290a" />{/if}
                </svg>{sym}</td>
                <td>{bid}</td><td>{ask}</td><td>{spread}</td><td>{time}</td>
              </tr>
            {/each}
          </tbody>
        </table>
        <div class="tabs"><button class="tab active">交易品种</button><button class="tab">即时图</button></div>
      </div>
    </section>

    <section class="chartwin">
      <div class="chart">
        <svg class="plot" height="283" aria-label="XAUUSDm H1">
          <rect x="3" y="2" width="100%" height="195" fill="none" stroke="#fff" shape-rendering="crispEdges" transform="translate(-.5 .5)" />
          <g shape-rendering="crispEdges" fill="none" stroke="#fff">
            {#each days as d}
              <path d={`M${Math.round(X(d)) + 0.5} 3v193M${Math.round(X(d)) + 0.5} 200v62`} stroke-dasharray="3 2" />
            {/each}
          </g>
          <g shape-rendering="crispEdges">
            {#each candles as c}
              <path d={`M${c.x + 0.5} ${c.hi}V${c.lo}`} stroke={c.up ? '#f00' : '#48d1cc'} />
              {#if c.up}
                <rect x={c.x - 0.5} y={c.top} width="2" height={c.h} fill="#000" stroke="#f00" />
              {:else}
                <rect x={c.x - 1} y={c.top} width="3" height={c.h} fill="#48d1cc" />
              {/if}
            {/each}
          </g>
          <g fill="none" shape-rendering="crispEdges">
            <polyline points={poly(bandTop)} stroke="#708090" stroke-dasharray="3 3" />
            <polyline points={poly(bandMid)} stroke="#708090" stroke-dasharray="3 3" />
            <polyline points={poly(bandLow)} stroke="#708090" stroke-dasharray="3 3" />
            <polyline points={poly(fast)} stroke="#fff" />
            <polyline points={poly(slow)} stroke="#ff0" />
            <polyline points={poly(magenta)} stroke="#ff1493" />
            <polyline points={poly(green)} stroke="#0f0" />
            <polyline points={poly(red)} stroke="#f00" />
          </g>
          {#each tags as [y, label]}
            <text x="10" y={Y(y)} class="tag">{label}</text>
          {/each}
          <g shape-rendering="crispEdges">
            {#each levels as [y, color, dash]}
              <line x1="3" x2="100%" y1={Math.floor(Y(y)) + 0.5} y2={Math.floor(Y(y)) + 0.5} stroke={color} stroke-dasharray={dash} />
            {/each}
          </g>
          <rect x="3" y="199" width="100%" height="64" fill="none" stroke="#fff" shape-rendering="crispEdges" transform="translate(-.5 .5)" />
          <g shape-rendering="crispEdges">
            {#each bars as b}
              <rect x={b.x} y={b.v > 0 ? 230 - b.v : 231} width="1" height={Math.max(1, Math.abs(b.v))} fill={b.v > 0 ? '#f00' : '#00ff7f'} />
            {/each}
            <line x1="3" x2="100%" y1="230.500" y2="230.500" stroke="#c0c0c0" stroke-dasharray="3 3" />
            <polyline points={poly(macdWhite)} fill="none" stroke="#fff" />
            <polyline points={poly(macdYellow)} fill="none" stroke="#ff0" />
          </g>
          <path d="M1180 3h9l-4.500 5z" fill="#8794a5" />
          <path d="M6 13l2-5 5 5z" fill="#fff" />
          <text x="17" y="14">XAUUSDm,H1</text>
          <text x="86" y="14">1911.672 1912.505 1906.900 1909.502</text>
          <text x="7" y="212">MACD(12,26,9) -4.6302 -4.6654 0.0704 0.0000</text>
          {#each times as t, i}
            <path d={`M${3.5 + 64 * i} 263v3`} stroke="#fff" />
            <text x={2 + 64 * i} y="275">{t}</text>
          {/each}
        </svg>
        <svg class="axis" width="51" height="283" aria-label="价格轴">
          <path d="M.5 2v195.500M.5 199v65" stroke="#fff" shape-rendering="crispEdges" />
          {#each prices as [y, label]}
            <path d={`M0 ${Math.floor(Y(y)) + 0.5}h3`} stroke="#fff" />
            <text x="6" y={Math.round(Y(y)) + 3}>{label}</text>
          {/each}
          <rect x="2" y="151" width="46" height="28" fill="#fff" />
          <rect x="2" y="151" width="46" height="25" fill="#f00" />
          <text x="6" y="160" class="dark">1925.544</text>
          <text x="6" y="170" class="dark">1915.861</text>
          <text x="4" y="210">17.3501</text>
          <text x="3" y="234">0.00</text>
          <text x="3" y="259">-18.4512</text>
        </svg>
        <div class="trade">
          <button class="side sell"><span class="cap">SELL</span><span class="quote"><b>1909</b><strong>50</strong><sup>2</sup></span></button>
          <button class="side buy"><span class="cap">BUY</span><span class="quote"><b>1909</b><strong>70</strong><sup>2</sup></span></button>
          <div class="lots">
            <button aria-label="减少"><i class="tri down"></i></button>
            <input aria-label="手数" bind:value={volume} />
            <button aria-label="增加"><i class="tri up"></i></button>
          </div>
        </div>
      </div>
      <div class="tabs chart-tabs">
        {#each charts as c, i}
          <button class="tab" class:active={i === 0}>{c}</button>
        {/each}
        <span class="scrollers"><button class="left" aria-label="向左"></button><button class="right" aria-label="向右"></button></span>
      </div>
    </section>
  </main>

  <section class="desk">
    <div class="rail"><button aria-label="关闭终端"><svg width="7" height="7" viewBox="0 0 7 7"><path d="M1 1l5 5M6 1L1 6" stroke="#000" stroke-width="1.600" /></svg></button><div class="strip"></div></div>
    <div class="orders">
      <table>
        <colgroup>
          <col class="c152" /><col class="c212" /><col class="c106" /><col class="c82" /><col class="c106" />
          <col class="c118" /><col class="c118" /><col class="c118" /><col class="c118" /><col class="c118" /><col class="c118" /><col class="c177" /><col />
        </colgroup>
        <thead>
          <tr><th>订单<svg width="9" height="9" viewBox="0 0 9 9" aria-hidden="true"><path d="M1 8L5 1" stroke="#888" /><path d="M5 1l3 7H1" fill="none" stroke="#fff" /></svg></th>{#each heads as h}<th>{h}</th>{/each}<th>获利</th><th>注释</th></tr>
        </thead>
        <tbody>
          {#each open as row, i}{@render orderRow(row, i, 'sell')}{/each}
          <tr class="sum">
            <td class="first" colspan="11">
              <span class="sumline"><svg width="12" height="14" viewBox="0 0 12 14" aria-hidden="true"><path d="M.5.500h11v13H.5z" fill="#fff" stroke="#555" /><path d="M6 3l3.500 4h-2v4h-3V7h-2z" fill="#2fc52f" stroke="#0b6e12" stroke-width=".8" /></svg>{#each balance as b}<span>{b}</span>{/each}</span>
            </td>
            <td><span class="profit total">242.30</span></td>
            <td></td>
          </tr>
          {#each pending as row, i}{@render orderRow(row, i, 'limit')}{/each}
        </tbody>
      </table>
      <div class="watermark">
        <svg width="30" height="34" viewBox="0 0 30 34" aria-hidden="true">
          <path d="M15 2c10 0 14 4 14 14 0 9-3 12-8 13l-7 5-1-4C5 30 2 26 2 16S5 2 15 2z" fill="#222" /><path d="M14 1c10 0 14 4 14 14 0 9-3 12-8 13l-7 5 1-4C4 29 0 25 0 15S4 1 14 1z" fill="#fff" />
          <path d="M21 7c-4-1-6 1-7 5l-3 16M6 16h4M13 16h6" fill="none" stroke="#222" stroke-width="1.500" /><path d="M21 9c-3-1-4 0-5 4l-3 17" fill="none" stroke="#cce8cf" stroke-width="2" />
        </svg>
        <span>@doufafa1818</span>
      </div>
    </div>
  </section>
</div>

<style>
  :global(body) { margin: 0; background: #f0f0f0; }
  .app { display: flex; flex-direction: column; min-height: 100vh; background: #f0f0f0; color: #000; font: 12px/16px "Noto Sans", "Noto Sans CJK SC", sans-serif; overflow: hidden; }
  .app :global(svg) { display: block; flex: none; }
  button { font: inherit; color: inherit; background: none; border: 0; padding: 0; margin: 0; display: flex; align-items: center; justify-content: center; }
  h1, h2 { font: inherit; margin: 0; white-space: nowrap; }

  .title { display: flex; align-items: center; height: 21px; border-top: 1px solid #32363c; background: linear-gradient(#9ab5d3, #b9d2eb); padding: 0 3px 0 2px; gap: 8px; }
  .title h1 { flex: 1; font-size: 13px; }
  .winbtns { display: flex; gap: 3px; align-self: flex-start; padding-top: 1px; }
  .winbtns button { width: 30px; height: 17px; border: 1px solid #56708f; border-radius: 2px; box-shadow: inset 0 0 0 1px #d4e2f0; background: linear-gradient(#c6d7ea 45%, #9db8d6 50%, #b8cfe6); }
  .winbtns .close { border-color: #4a1512; box-shadow: inset 0 0 0 1px #e8a79c; background: linear-gradient(#e09a8c 45%, #bd4127 50%, #d17a5c); }

  .menu { display: flex; align-items: center; height: 20px; border-bottom: 1px solid #a0a0a0; box-shadow: 0 1px #fff; margin-bottom: 1px; padding: 0 1px 0 4px; gap: 20px; }
  .menu > svg { margin-right: -12px; }
  .mdi { display: flex; gap: 1px; margin-left: auto; }
  .mdi button { width: 18px; height: 18px; border: 1px solid #95a9c0; background: #e4eef9; box-shadow: inset 0 0 0 1px #f6faff; }
  .mdi svg { margin: -1px; }

  .bars { border-bottom: 1px solid #a0a0a0; }
  .row { display: flex; height: 27px; }
  .row.second { height: 25px; }
  .bar { display: flex; align-items: center; gap: 3px; padding: 0 3px 0 2px; border-right: 1px solid #a0a0a0; border-bottom: 1px solid #a0a0a0; box-shadow: 1px 1px #cce8cf; margin: 0 1px 1px 0; }
  .second .bar { border-bottom: 0; margin-bottom: 0; padding-right: 2px; }
  .draw .sep { margin-right: 1px; }
  .grip { width: 3px; height: 20px; background: repeating-linear-gradient(#aaa 0 1px, #f0f0f0 1px 2px); }
  .sep { width: 1px; height: 22px; margin-left: 1px; background: #a0a0a0; border-right: 1px solid #fff; }
  .tool { width: 25px; height: 22px; box-sizing: border-box; }
  .tool.on { border: 1px solid #fff; border-top-color: #a0a0a0; border-left-color: #a0a0a0; background: #f8f8f8; }
  .tool.drop { width: 36px; justify-content: space-between; padding: 0 4px 0 3px; }
  .tool.wide { width: auto; padding: 0 4px; gap: 2px; white-space: nowrap; }
  .caret { border: 3px solid transparent; border-top-color: #000; border-bottom: 0; }
  .period { color: #404040; font-size: 10px; }
  .corner { margin-left: auto; display: flex; align-items: flex-start; gap: 7px; padding: 0 5px; }
  .corner > button:first-child { margin-top: 4px; }
  .msg { position: relative; }
  .msg b { position: absolute; left: 14px; top: 2px; color: #fff; font-weight: 400; }

  main { display: flex; height: 307px; }
  .market { width: 380px; padding: 2px 0 0 3px; border-right: 1px solid #a0a0a0; border-bottom: 1px solid #a0a0a0; display: flex; flex-direction: column; height: 303px; flex: none; }
  .caption { display: flex; height: 14px; margin-right: 2px; align-items: center; }
  .caption h2 { flex: 1; line-height: 14px; color: #3c4a5c; padding-left: 3px; background: linear-gradient(90deg, #bac9da, #dbe7f4); }
  .caption button { width: 15px; }
  .sheet { flex: 1; display: flex; flex-direction: column; border: 1px solid #a0a0a0; border-right-color: #cce8cf; border-bottom-color: #cce8cf; background: #cce8cf; margin: 0 3px 2px 0; }
  table { border-collapse: separate; border-spacing: 0; table-layout: fixed; width: 100%; }
  th { height: 24px; padding: 2px 5px 0 0; box-sizing: border-box; font-weight: 400; text-align: right; background: linear-gradient(#fff 45%, #f3f5f8 50%, #f1f3f6); border-right: 1px solid #e2e4e8; border-bottom: 2px solid #c6c6c6; white-space: nowrap; }
  th:first-child { text-align: left; padding-left: 6px; }
  td { height: 21px; box-sizing: border-box; padding: 2px 2px 0 0; text-align: right; border-right: 1px solid #c6c6c6; border-bottom: 1px solid #c6c6c6; line-height: 18px; white-space: nowrap; overflow: hidden; }
  td:last-child { border-right: 0; }
  td.first { text-align: left; }
  td.first svg { display: inline-block; vertical-align: -3px; }
  tr.sel td { background: #39f; color: #eaf4ff; }
  .q-name { width: 112px; } .q-price { width: 75px; } .q-spread { width: 37px; }
  .quotes td { background: #f0fff0; color: #00f; }
  .quotes td:last-child { padding-right: 4px; }
  .quotes td.first { padding-left: 4px; color: #000; }
  .quotes td.first svg { margin-right: 5px; }
  .quotes tr.down td:not(.first) { color: #f00; }
  .quotes tr.sel td.first, .quotes tr.sel.down td:not(.first) { background: #39f; color: #dcecff; }
  .tabs { display: flex; background: #f0f0f0; border-top: 1px solid #000; color: #808080; height: 23px; }
  .market .tabs { margin-top: auto; padding-left: 2px; }
  .tab { padding: 1px 10px 0; height: 20px; position: relative; box-sizing: border-box; }
  .tab.active { color: #000; background: #cce8cf; border: 1px solid #000; border-width: 0 2px 2px 1px; border-right-color: #444; margin-top: -1px; height: 22px; padding: 2px 8px 0 9px; }
  .tab:not(.active)::after { content: ''; position: absolute; right: 0; top: 4px; height: 15px; border-right: 1px solid #777; }

  .chartwin { flex: 1; min-width: 0; display: flex; flex-direction: column; }
  .chart { position: relative; display: flex; height: 283px; background: #000; border: 1px solid #696969; border-right: 2px solid #e3e3e3; border-bottom: 1px solid #e3e3e3; margin-bottom: 1px; }
  .plot { flex: 1; min-width: 0; overflow: hidden; width: 100%; }
  .chart > svg.plot { flex: 1; }
  .chart text { fill: #fff; font: 9px "DejaVu Sans Condensed", "Noto Sans", sans-serif; }
  .chart text.tag { font-weight: 700; font-size: 8px; }
  .chart text.dark { fill: #300; }
  .trade { position: absolute; left: 6px; top: 22px; display: flex; gap: 3px; color: #cce8cf; }
  .side { width: 108px; height: 57px; flex-direction: column; justify-content: flex-start; background: linear-gradient(#5050ff, #2020d0 50%, #0000a8); border-radius: 1px; align-items: flex-start; }
  .side.buy { align-items: flex-end; }
  .cap { width: 44px; height: 22px; margin: 0 4px; line-height: 22px; border-bottom: 1px solid #7d7dff; }
  .quote { display: flex; align-items: flex-end; align-self: stretch; height: 32px; padding: 0 13px 0 15px; box-sizing: border-box; gap: 4px; }
  .quote b { line-height: 14px; padding-bottom: 1px; }
  .quote strong { font: 400 31px/30px "Open Sans", "Noto Sans", sans-serif; }
  .quote sup { font-weight: 700; line-height: 14px; align-self: flex-start; }
  .lots { position: absolute; left: 52px; top: 0; display: flex; width: 113px; height: 25px; border: 1px solid #000; border-top: 0; border-width: 0 1px 3px; background: #fff; padding: 1px; box-sizing: border-box; }
  .lots button { width: 20px; background: linear-gradient(#f4f4f4, #cfcfcf); border: 1px solid #aaa; box-sizing: border-box; }
  .lots input { flex: 1; min-width: 0; border: 0; padding: 0 3px 0 0; text-align: right; font: inherit; background: #fff; color: #000; }
  .tri { border: 3px solid transparent; }
  .tri.down { border-top-color: #4a64a8; border-bottom: 0; }
  .tri.up { border-bottom-color: #4a64a8; border-top: 0; }
  .chart-tabs { height: 18px; padding-left: 4px; border-top: 1px solid #000; border-bottom: 1px solid #fff; }
  .chart-tabs .tab { padding: 2px 12px 0 13px; height: 18px; }
  .chart-tabs .tab.active { height: 19px; padding: 2px 12px 0; }
  .scrollers { margin-left: auto; display: flex; gap: 15px; padding-right: 9px; align-items: center; }
  .scrollers button { border: 3px solid transparent; }
  .scrollers .left { border-right-color: #888; border-left: 0; }
  .scrollers .right { border-left-color: #888; border-right: 0; }

  .desk { flex: 1; display: flex; padding: 3px 4px 0 0; }
  .rail { width: 15px; display: flex; flex-direction: column; }
  .rail button { height: 14px; width: 13px; }
  .strip { flex: 1; margin: 0 1px; background: linear-gradient(#c0d6ec, #9db9d8); }
  .orders { flex: 1; min-width: 0; position: relative; background: #cce8cf; border: 1px solid #a0a0a0; border-width: 1px 0 0 1px; }
  .orders td.first { padding-left: 3px; }
  .orders td.first svg { margin-right: 5px; vertical-align: -4px; }
  .orders th svg { display: inline-block; margin-left: 10px; vertical-align: -1px; }
  .alt td { background: #b7d3ba; }
  .orders tr.sel td { background: #39f; color: #eaf4ff; }
  .sum td { background: #c6c6c6; font-weight: 700; }
  .sumline { display: flex; align-items: center; gap: 10px; }
  .orders td.first .sumline svg { margin: 0 -4px 0 0; }
  .profit { display: flex; justify-content: flex-end; align-items: center; }
  .total { padding-right: 21px; }
  .drop-order { width: 21px; padding-left: 6px; box-sizing: border-box; }
  .c152 { width: 152px; } .c212 { width: 212px; } .c106 { width: 106px; } .c82 { width: 82px; } .c118 { width: 118px; } .c177 { width: 177px; }
  .watermark { position: absolute; right: 18px; bottom: 28px; display: flex; align-items: center; gap: 10px; color: #fff; font: 300 31px/44px "Open Sans", "Noto Sans", sans-serif; text-shadow: 1px 1px 0 #333; }
</style>
